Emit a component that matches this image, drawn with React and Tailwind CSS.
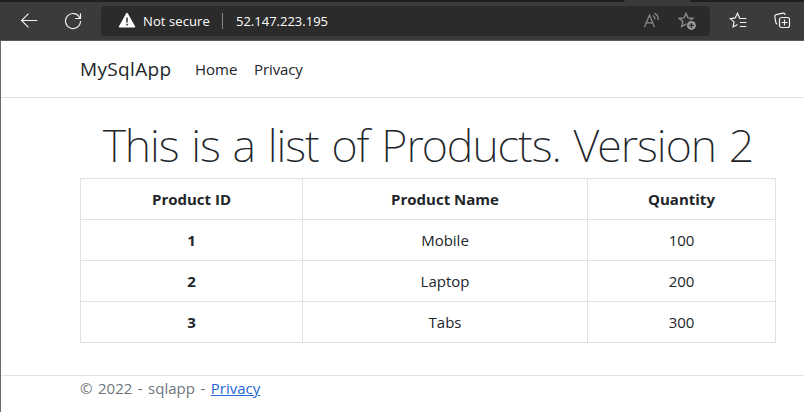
import React from "react";

const rows = [
  ["1", "Mobile", "100"],
  ["2", "Laptop", "200"],
  ["3", "Tabs", "300"],
];

const STAR = "M8 1.3 10 5.8l4.9.5-3.7 3.3 1.1 4.9L8 12.1l-4.3 2.4 1.1-4.9L1.1 6.3 6 5.8z";

function Toolbar() {
  return (
    <header className="h-[41px] bg-[#3b3b3b] border-b border-[#5c5c5c] flex flex-col">
      <div className="h-[2px] shrink-0 bg-[#1f1f1f] flex justify-end pr-[113px]">
        <div className="w-[67px] bg-[#3b3b3b] rounded-t-[2px]" />
      </div>
      <div className="flex items-start pt-1 text-[#f2f2f2]">
        <svg className="ml-[20px] mt-[6px] w-[18px] h-[16px]" viewBox="0 0 18 16" fill="none" stroke="currentColor" strokeWidth="1.15">
          <path d="M8.5 1.7 1.6 8.5l6.9 6.8M1.6 8.5h15.6" />
        </svg>
        <svg className="ml-[26px] mt-[6px] w-[18px] h-[18px]" viewBox="0 0 18 18" fill="none" stroke="currentColor" strokeWidth="1.15">
          <path d="M15.8 5.9A7.5 7.5 0 1 0 16.5 9M16.5 1.2v5.3h-5.3" />
        </svg>
        <div className="ml-[19px] w-[609px] h-[30px] rounded bg-[#2b2b2b] flex">
          <svg className="ml-[17px] mt-[6px] w-[18px] h-[17px]" viewBox="0 0 18 17">
            <path d="M8.1 1.5Q9 .2 9.9 1.5L17 14.2q.6 1.3-.8 1.3H1.8q-1.4 0-.8-1.3z" fill="#fff" />
            <path d="M9 5.5v5M9 11.8v1.7" stroke="#2b2b2b" strokeWidth="1.5" />
          </svg>
          <span className="ml-[7px] w-[70px] text-[13px] leading-[30px] tracking-[0.1px] text-white whitespace-nowrap">Not secure</span>
          <i className="ml-[9px] mt-[7px] w-px h-4 bg-[#858585]" />
          <span className="ml-[13px] w-[400px] text-[13px] leading-[30px] text-white">52.147.223.195</span>
          <svg className="ml-[7px] mt-[6px] w-[17px] h-[17px]" viewBox="0 0 17 17" fill="none" stroke="#8e8e8e" strokeWidth="1.2">
            <path d="M1.5 15 6.5 3 11.5 15M3.2 10.8h6.6M10 3.5q2 1.2 2 4M11.5 1.2q4.2 2.2 3.7 6.8" />
          </svg>
          <svg className="ml-[18px] mt-[6px] w-[19px] h-[19px]" viewBox="0 0 19 19" fill="none" stroke="#8e8e8e" strokeWidth="1.3">
            <path d={STAR} />
            <circle cx="13.4" cy="13.4" r="5.3" fill="#2b2b2b" stroke="none" />
            <circle cx="13.4" cy="13.4" r="4.5" fill="#999" stroke="none" />
            <path d="M10.9 13.4h5M13.4 10.9v5" stroke="#2b2b2b" />
          </svg>
        </div>
        <svg className="ml-[19px] mt-[6px] w-[18px] h-[18px]" viewBox="0 0 18 18" fill="none" stroke="currentColor" strokeWidth="1.2">
          <path d="M17.3 6.5h-6.5L8.5 1.3 6.2 5.9l-4.9.7L5 9.9l-.9 5 4.4-2.5M10.8 10.5h6.5M10.8 14.5h6.5" />
        </svg>
        <svg className="ml-[26px] mt-[6px] w-[18px] h-[18px]" viewBox="0 0 18 18" fill="none" stroke="currentColor" strokeWidth="1.2">
          <path d="M4.3 12.2Q3.1 11.8 2.8 10.5L1.8 4.8Q1.6 3 3.3 2.6L10 1.1q1.8-.2 2.3 1.8" />
          <rect x="6.5" y="5.5" width="10" height="10" rx="2" />
          <path d="M11.5 7.5v6M8.5 10.5h6" />
        </svg>
      </div>
    </header>
  );
}

export default function App() {
  return (
    <div className="w-[804px] h-[412px] overflow-hidden bg-white text-[#212529] font-['Open_Sans','Noto_Sans',sans-serif] text-[15px]">
      <Toolbar />
      <div className="border-l border-[#6b6b6b] h-[371px]">
        <nav className="h-[57px] border-b border-[#dee2e6] pl-[79px] flex items-center">
          <span className="w-[91px] text-[19px] tracking-[0.35px] whitespace-nowrap">MySqlApp</span>
          <span className="ml-[24px] w-[43px]">Home</span>
          <span className="ml-[16px] tracking-[-0.1px]">Privacy</span>
        </nav>
        <main className="h-[277px] pt-[14px] pl-[79px]">
          <h1 className="w-[696px] h-[65px] text-center whitespace-nowrap text-[45px] leading-[65px] tracking-[-1px] [word-spacing:2px] font-extralight font-['Noto_Sans',sans-serif]">
            This is a list of Products. Version 2
          </h1>
          <table className="w-[696px] table-fixed border-collapse text-center mt-px">
            <colgroup>
              <col className="w-[222px]" />
              <col className="w-[285px]" />
              <col className="w-[188px]" />
            </colgroup>
            <thead>
              <tr className="h-[41px]">
                {["Product ID", "Product Name", "Quantity"].map((t) => (
                  <th key={t} className="border border-[#dee2e6] p-0 font-bold">{t}</th>
                ))}
              </tr>
            </thead>
            <tbody>
              {rows.map(([id, name, qty]) => (
                <tr key={id} className="h-[41px]">
                  <th className="border border-[#dee2e6] p-0 font-bold">{id}</th>
                  <td className="border border-[#dee2e6] p-0">{name}</td>
                  <td className="border border-[#dee2e6] p-0">{qty}</td>
                </tr>
              ))}
            </tbody>
          </table>
        </main>
        <footer className="border-t border-[#dee2e6] pl-[79px] leading-6 text-[#6c757d] [word-spacing:1.6px]">
          © 2022 - sqlapp - <a className="text-[#2468d6] underline">Privacy</a>
        </footer>
      </div>
    </div>
  );
}
